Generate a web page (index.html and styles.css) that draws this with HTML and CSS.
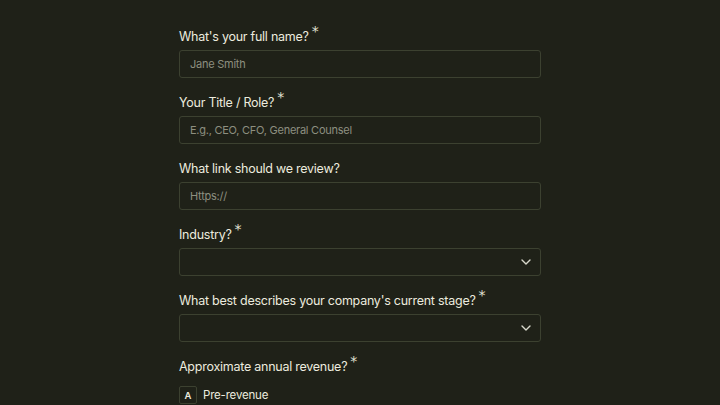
FILE: index.html
```html
<!DOCTYPE html>
<html lang="en">
<head>
<meta charset="utf-8">
<link rel="stylesheet" href="styles.css">
</head>
<body>
<form class="form">
  <div class="field">
    <label class="label">What's your full name?<span class="req">*</span></label>
    <div class="input"><span class="ph">Jane Smith</span></div>
  </div>
  <div class="field">
    <label class="label">Your Title / Role?<span class="req">*</span></label>
    <div class="input"><span class="ph">E.g., CEO, CFO, General Counsel</span></div>
  </div>
  <div class="field">
    <label class="label">What link should we review?</label>
    <div class="input"><span class="ph">Https://</span></div>
  </div>
  <div class="field">
    <label class="label">Industry?<span class="req">*</span></label>
    <div class="input select">
      <svg class="chev" width="10" height="6" viewBox="0 0 10 6"><path d="M1 1l4 4 4-4" fill="none" stroke="#d8d8cc" stroke-width="1.4" stroke-linecap="round" stroke-linejoin="round"/></svg>
    </div>
  </div>
  <div class="field">
    <label class="label">What best describes your company's current stage?<span class="req">*</span></label>
    <div class="input select">
      <svg class="chev" width="10" height="6" viewBox="0 0 10 6"><path d="M1 1l4 4 4-4" fill="none" stroke="#d8d8cc" stroke-width="1.4" stroke-linecap="round" stroke-linejoin="round"/></svg>
    </div>
  </div>
  <div class="field">
    <label class="label">Approximate annual revenue?<span class="req">*</span></label>
    <div class="option"><span class="key">A</span><span class="opt-text">Pre-revenue</span></div>
  </div>
</form>
</body>
</html>
```
FILE: styles.css
```css
html, body {
  margin: 0;
  padding: 0;
  background: #1f2118;
  height: 100%;
  overflow: hidden;
}
body {
  font-family: Inter, "Noto Sans", sans-serif;
  color: #ecebdf;
}
.form {
  width: 362px;
  margin-left: 179px;
  padding-top: 28px;
  display: flex;
  flex-direction: column;
  gap: 16px;
}
.field {
  display: flex;
  flex-direction: column;
}
.label {
  font-size: 12.5px;
  line-height: 18px;
  margin-bottom: 4px;
  letter-spacing: -0.25px;
}
.req {
  font-size: 14px;
  margin-left: 3px;
  position: relative;
  top: -5px;
  color: #e2e1d5;
  font-family: "DejaVu Sans", sans-serif;
  line-height: 0;
}
.input {
  height: 28px;
  box-sizing: border-box;
  border: 1px solid #3c4130;
  border-radius: 3px;
  display: flex;
  align-items: center;
  padding: 0 10px;
}
.ph {
  font-size: 11px;
  letter-spacing: -0.25px;
  color: #8d8f80;
}
.select {
  justify-content: flex-end;
  padding-right: 9px;
}
.option {
  margin-top: 6px;
  display: flex;
  align-items: center;
  gap: 6px;
}
.key {
  width: 18px;
  height: 18px;
  box-sizing: border-box;
  border: 1px solid #3c4130;
  border-radius: 2px;
  display: flex;
  align-items: center;
  justify-content: center;
  font-size: 9.5px;
  font-weight: 600;
}
.opt-text {
  font-size: 11.5px;
  letter-spacing: -0.2px;
}
```
